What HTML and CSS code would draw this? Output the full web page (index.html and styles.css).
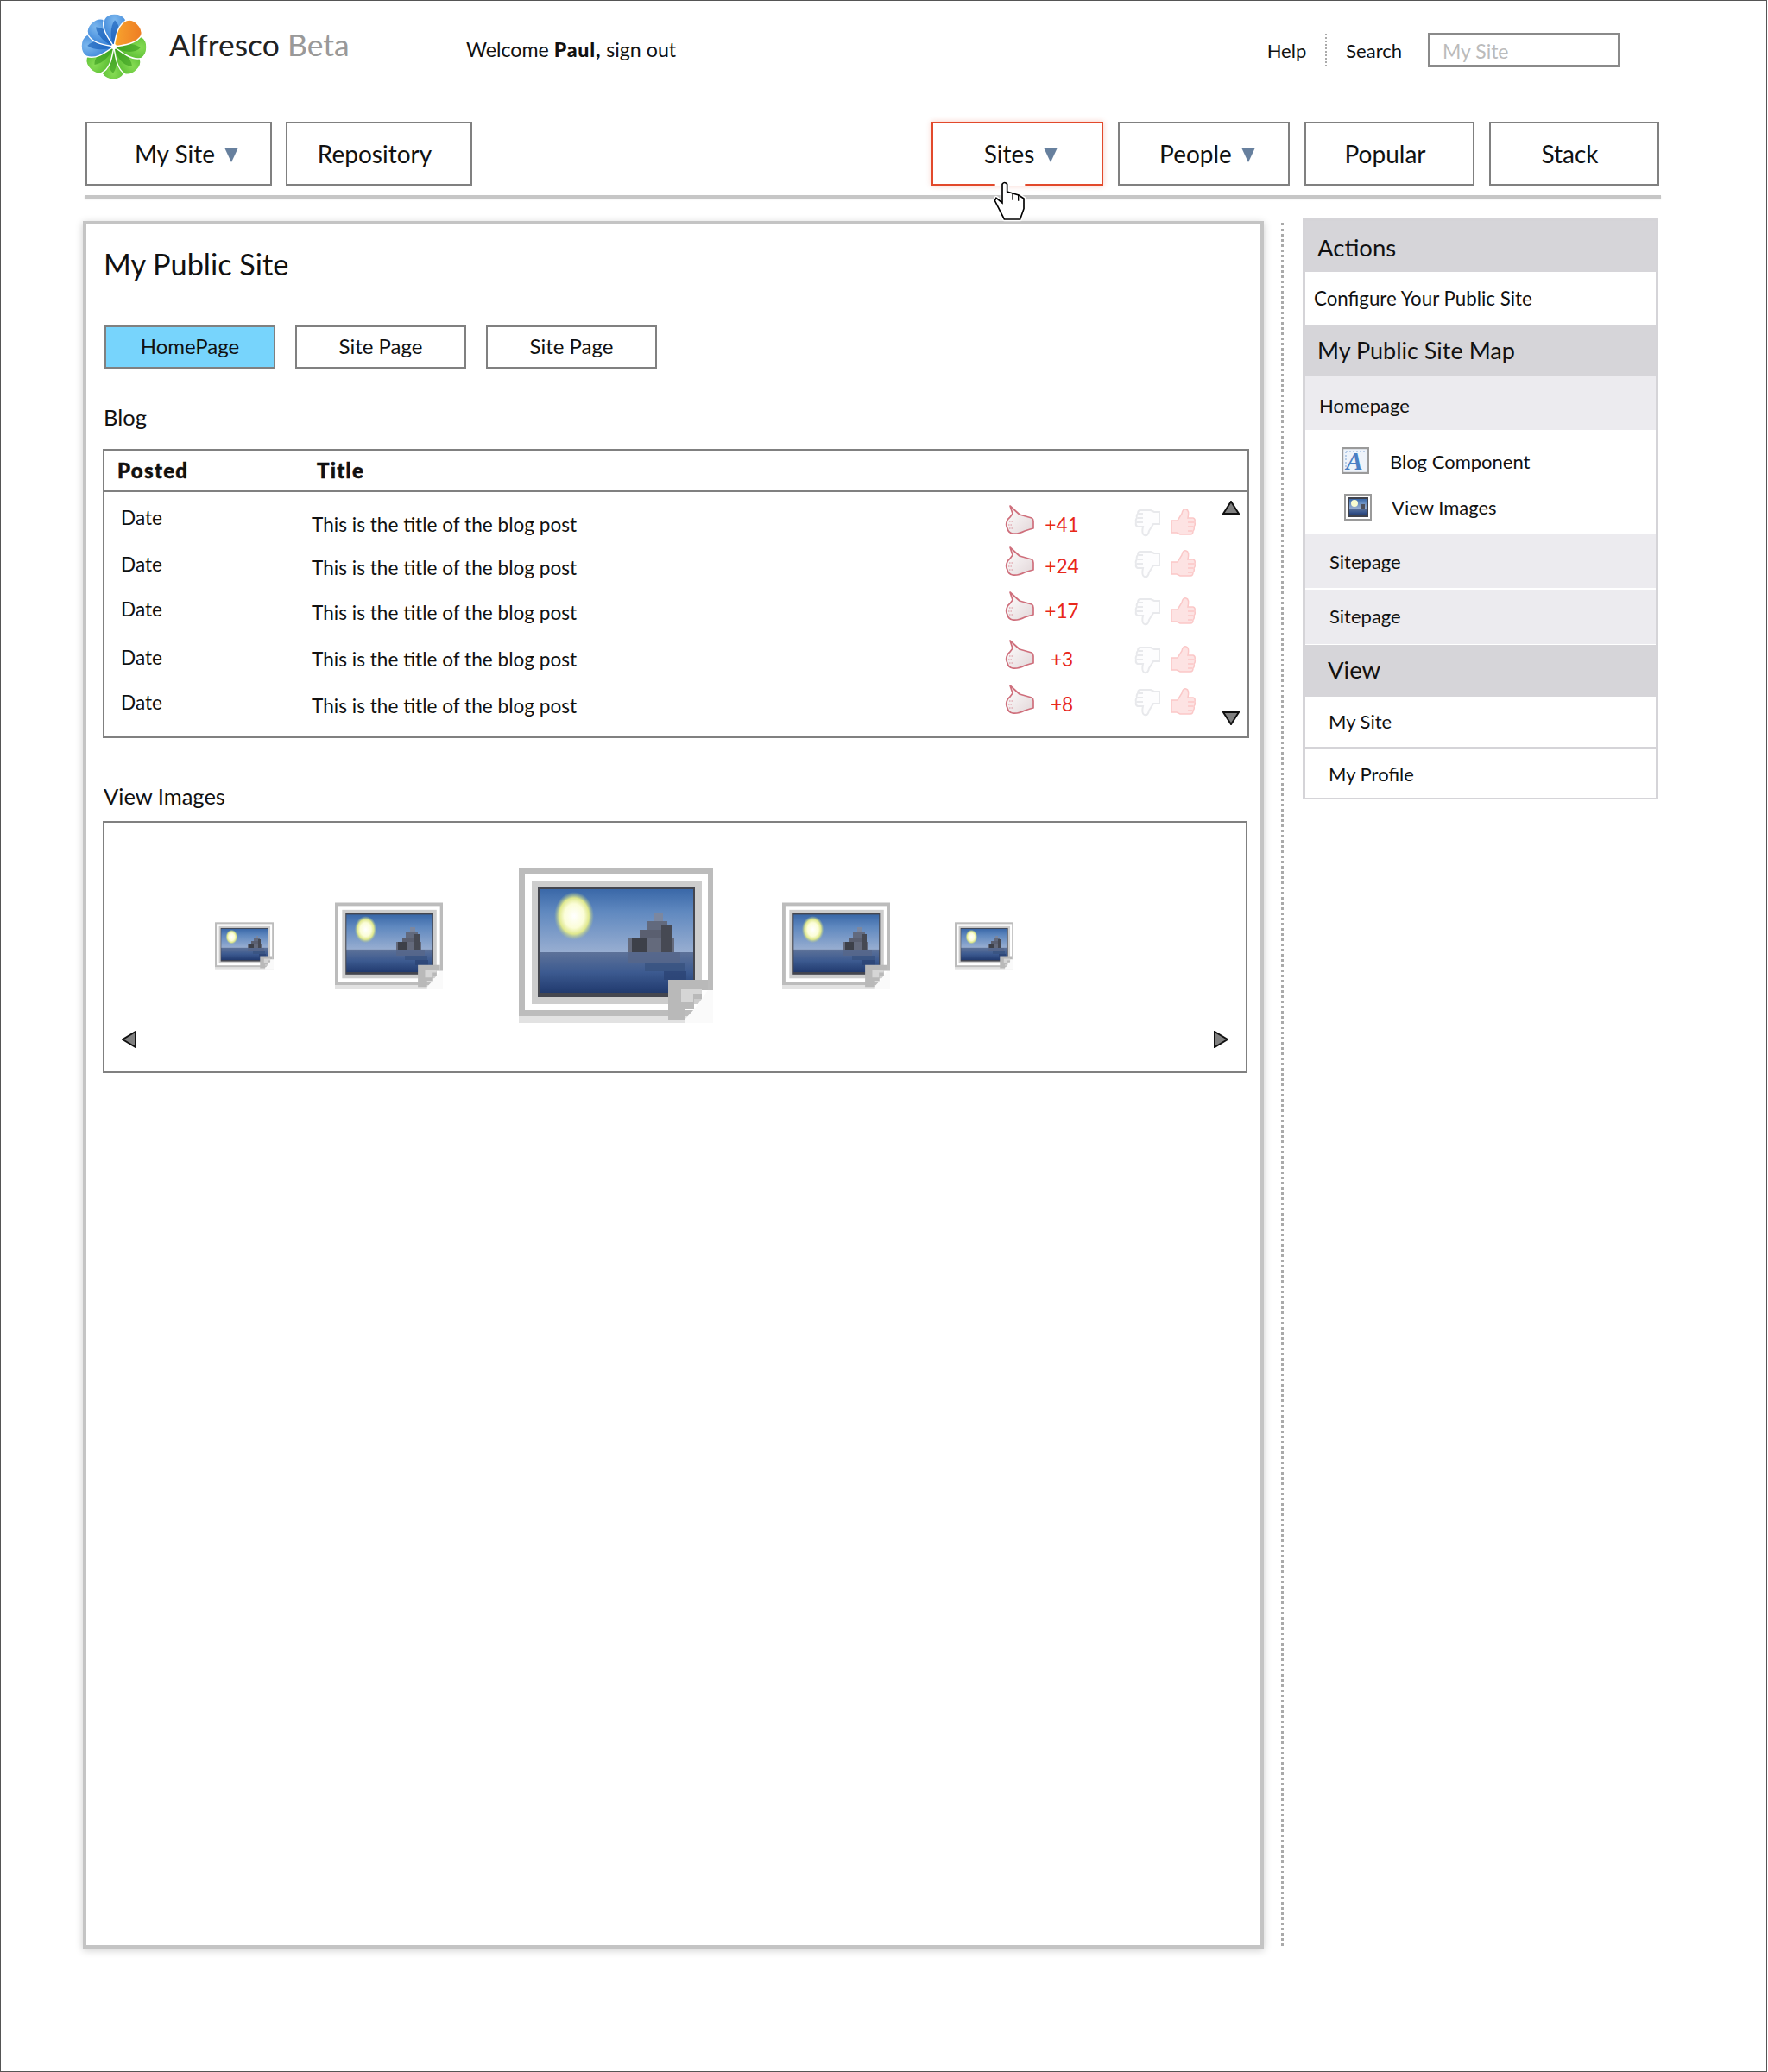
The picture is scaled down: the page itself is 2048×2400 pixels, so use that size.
FILE: index.html
```html
<!DOCTYPE html>
<html lang="en">
<head>
    <meta charset="UTF-8">
    <meta name="viewport" content="width=device-width, initial-scale=1.0">
    <title>Alfresco Beta - My Public Site</title>
    <link rel="stylesheet" href="styles.css">
</head>
<body>
    <!-- shared drawings -->
    <svg class="defs" xmlns="http://www.w3.org/2000/svg">
        <defs>
            <linearGradient id="sky" x1="0" y1="0" x2="0" y2="1">
                <stop offset="0" stop-color="#3a68a8"/>
                <stop offset="0.35" stop-color="#5f88bf"/>
                <stop offset="1" stop-color="#98aed1"/>
            </linearGradient>
            <linearGradient id="water" x1="0" y1="0" x2="0" y2="1">
                <stop offset="0" stop-color="#5d7299"/>
                <stop offset="0.5" stop-color="#3c5a90"/>
                <stop offset="1" stop-color="#213a6e"/>
            </linearGradient>
            <radialGradient id="sun">
                <stop offset="0" stop-color="#ffffff"/>
                <stop offset="0.5" stop-color="#fbfdd8"/>
                <stop offset="0.75" stop-color="#dfe88e"/>
                <stop offset="1" stop-color="#a9c08f" stop-opacity="0"/>
            </radialGradient>
            <linearGradient id="handFill" x1="0" y1="0" x2="1" y2="1">
                <stop offset="0" stop-color="#ffffff"/>
                <stop offset="1" stop-color="#e2d6d8"/>
            </linearGradient>
            <radialGradient id="petalBlue" cx="0.5" cy="0.2" r="0.9">
                <stop offset="0" stop-color="#7db8ee"/>
                <stop offset="1" stop-color="#1f6fd0"/>
            </radialGradient>
            <radialGradient id="petalGreen" cx="0.5" cy="0.2" r="0.9">
                <stop offset="0" stop-color="#86dc54"/>
                <stop offset="1" stop-color="#43ad22"/>
            </radialGradient>
            <linearGradient id="petalOrange" x1="0.8" y1="0" x2="0" y2="1">
                <stop offset="0" stop-color="#ee7c24"/>
                <stop offset="0.6" stop-color="#f59a2c"/>
                <stop offset="1" stop-color="#fbc512"/>
            </linearGradient>
            <symbol id="photo" viewBox="0 0 225 180">
                <rect x="0" y="172" width="225" height="8" fill="#e2e2e2"/>
                <rect width="225" height="172" fill="#bcbcbc"/>
                <rect x="7" y="7" width="212" height="158" fill="#ffffff"/>
                <rect x="15" y="15" width="197" height="143" fill="#cdcdcd"/>
                <rect x="22" y="22" width="182" height="128" fill="#44464f"/>
                <rect x="24" y="25" width="178" height="73" fill="url(#sky)"/>
                <rect x="24" y="98" width="178" height="47" fill="url(#water)"/>
                <ellipse cx="64" cy="56" rx="23" ry="28" fill="url(#sun)"/>
                <g shape-rendering="crispEdges">
                    <rect x="157" y="52" width="10" height="10" fill="#7b87a0"/>
                    <rect x="148" y="62" width="24" height="10" fill="#626a7e"/>
                    <rect x="140" y="72" width="36" height="10" fill="#5a5f70"/>
                    <rect x="127" y="82" width="53" height="16" fill="#646a7c"/>
                    <rect x="131" y="82" width="18" height="16" fill="#3d4049"/>
                    <rect x="165" y="66" width="12" height="32" fill="#464953"/>
                    <rect x="127" y="98" width="60" height="12" fill="#56668a" opacity="0.85"/>
                    <rect x="146" y="110" width="46" height="10" fill="#38527f" opacity="0.8"/>
                    <rect x="168" y="120" width="26" height="10" fill="#2c4474" opacity="0.8"/>
                </g>
                <polygon points="219,142 225,142 225,180 192,180 192,176 203,164 212,152" fill="#fafafa"/>
                <polygon points="173,130 219,130 219,142 212,142 212,152 203,152 203,164 192,164 192,176 173,176" fill="#b9b9b9"/>
                <polygon points="188,140 212,140 212,146 202,146 202,156 188,156" fill="#d6d6d6"/>
            </symbol>
            <symbol id="pointHand" viewBox="0 0 34 35">
                <path d="M6 1 L17 11 L31 15 Q33 16 33 19 L33 27 Q29 28 23 30 Q15 34 9 33 Q4 32 3 27 Q1 24 2 20 Q3 16 6 14 L9 10 Z" fill="url(#handFill)" stroke="#cf6f7c" stroke-width="1.7" stroke-linejoin="round"/>
                <path d="M5 19 L9 19 M4 23 L8 23 M5 27 L9 27" stroke="#d98d97" stroke-width="1.2" stroke-dasharray="1.5 1"/>
            </symbol>
            <symbol id="thumbUp" viewBox="0 0 32 34">
                <path d="M3 15 H10 L15 7 Q16 1 20 2 Q24 3 22 12 H28 Q31 13 30 17 Q31 20 29 22 Q30 25 28 27 Q28 31 25 31 H13 L9 29 H3 Z"/>
                <path d="M22 17 H29 M22 22 H28 M22 27 H27" fill="none"/>
            </symbol>
        </defs>
    </svg>

    <div class="page">
        <header class="topbar">
            <svg class="logo" viewBox="-39 -39 78 78" xmlns="http://www.w3.org/2000/svg">
                <g stroke="#ffffff" stroke-width="1.4">
                    <g transform="rotate(180)"><path d="M0 0 C-6 -9 -15 -20 -11 -31 C-7 -39 8 -39 13 -31 C16 -21 7 -9 0 0Z" fill="url(#petalGreen)"/><path d="M0 0 C-4 -9 -5 -22 1 -30 C8 -24 7 -11 0 0Z" fill="#2f9318" opacity="0.55" stroke="none"/></g>
                    <g transform="rotate(135)"><path d="M0 0 C-6 -9 -15 -20 -11 -31 C-7 -39 8 -39 13 -31 C16 -21 7 -9 0 0Z" fill="url(#petalGreen)"/><path d="M0 0 C-4 -9 -5 -22 1 -30 C8 -24 7 -11 0 0Z" fill="#2f9318" opacity="0.55" stroke="none"/></g>
                    <g transform="rotate(90)"><path d="M0 0 C-6 -9 -15 -20 -11 -31 C-7 -39 8 -39 13 -31 C16 -21 7 -9 0 0Z" fill="url(#petalGreen)"/><path d="M0 0 C-4 -9 -5 -22 1 -30 C8 -24 7 -11 0 0Z" fill="#2f9318" opacity="0.55" stroke="none"/></g>
                    <g transform="rotate(225)"><path d="M0 0 C-6 -9 -15 -20 -11 -31 C-7 -39 8 -39 13 -31 C16 -21 7 -9 0 0Z" fill="url(#petalGreen)"/><path d="M0 0 C-4 -9 -5 -22 1 -30 C8 -24 7 -11 0 0Z" fill="#2f9318" opacity="0.55" stroke="none"/></g>
                    <g transform="rotate(270)"><path d="M0 0 C-6 -9 -15 -20 -11 -31 C-7 -39 8 -39 13 -31 C16 -21 7 -9 0 0Z" fill="url(#petalBlue)"/><path d="M0 0 C-4 -9 -5 -22 1 -30 C8 -24 7 -11 0 0Z" fill="#0f57b4" opacity="0.6" stroke="none"/></g>
                    <g transform="rotate(315)"><path d="M0 0 C-6 -9 -15 -20 -11 -31 C-7 -39 8 -39 13 -31 C16 -21 7 -9 0 0Z" fill="url(#petalBlue)"/><path d="M0 0 C-4 -9 -5 -22 1 -30 C8 -24 7 -11 0 0Z" fill="#0f57b4" opacity="0.6" stroke="none"/></g>
                    <g transform="rotate(0)"><path d="M0 0 C-6 -9 -15 -20 -11 -31 C-7 -39 8 -39 13 -31 C16 -21 7 -9 0 0Z" fill="url(#petalBlue)"/><path d="M0 0 C-4 -9 -5 -22 1 -30 C8 -24 7 -11 0 0Z" fill="#0f57b4" opacity="0.6" stroke="none"/></g>
                    <g transform="rotate(45)"><path d="M0 0 C-6 -9 -15 -20 -11 -31 C-7 -39 8 -39 13 -31 C16 -21 7 -9 0 0Z" fill="url(#petalOrange)"/></g>
                </g>
                <circle r="3" fill="#ffffff"/>
            </svg>
            <div class="brand">Alfresco <span class="brand-beta">Beta</span></div>
            <div class="welcome">Welcome <strong>Paul,</strong> sign out</div>
            <div class="tools">
                <span class="tool-help">Help</span>
                <span class="tool-sep"></span>
                <span class="tool-search">Search</span>
                <input class="search-box" type="text" placeholder="My Site">
            </div>
        </header>

        <nav class="mainnav">
            <a class="nav-item has-caret nav-wide nav-mysite">My Site <span class="caret"></span></a>
            <a class="nav-item nav-wide nav-plain">Repository</a>
            <span class="nav-space"></span>
            <a class="nav-item has-caret nav-sites active">Sites <span class="caret"></span></a>
            <a class="nav-item has-caret nav-people">People <span class="caret"></span></a>
            <a class="nav-item nav-plain">Popular</a>
            <a class="nav-item nav-plain">Stack</a>
        </nav>
        <div class="nav-rule"></div>

        <div class="content">
            <main class="panel">
                <h1 class="site-title">My Public Site</h1>
                <div class="tabs">
                    <a class="tab selected">HomePage</a>
                    <a class="tab">Site Page</a>
                    <a class="tab">Site Page</a>
                </div>

                <h2 class="section-label blog-label">Blog</h2>
                <div class="blog-table">
                    <div class="blog-head">
                        <span class="head-posted">Posted</span>
                        <span class="head-title">Title</span>
                    </div>
                    <div class="blog-body" id="blogRows"></div>
                    <svg class="scroll-arrow scroll-up" viewBox="0 0 20 16"><polygon points="10,1 19,15 1,15"/></svg>
                    <svg class="scroll-arrow scroll-down" viewBox="0 0 20 16"><polygon points="1,1 19,1 10,15"/></svg>
                </div>

                <h2 class="section-label images-label">View Images</h2>
                <div class="image-box">
                    <div class="strip">
                        <svg class="thumb thumb-sm"><use href="#photo"/></svg>
                        <svg class="thumb thumb-md"><use href="#photo"/></svg>
                        <svg class="thumb thumb-lg"><use href="#photo"/></svg>
                        <svg class="thumb thumb-md"><use href="#photo"/></svg>
                        <svg class="thumb thumb-sm"><use href="#photo"/></svg>
                    </div>
                    <div class="strip-arrows">
                        <svg class="strip-arrow" viewBox="0 0 17 20"><polygon points="16,1 16,19 1,10"/></svg>
                        <svg class="strip-arrow" viewBox="0 0 17 20"><polygon points="1,1 1,19 16,10"/></svg>
                    </div>
                </div>
            </main>

            <div class="divider"></div>

            <aside class="sidebar">
                <div class="side-head side-actions">Actions</div>
                <div class="side-link side-config">Configure Your Public Site</div>
                <div class="side-head side-map">My Public Site Map</div>
                <div class="side-sub side-home">Homepage</div>
                <div class="side-comps">
                    <div class="comp">
                        <svg class="comp-icon" viewBox="0 0 32 31">
                            <rect x="1" y="1" width="30" height="29" fill="#eef3fa" stroke="#9a9a9a" stroke-width="2.4"/>
                            <path d="M5 5 H27 M5 5 V26" stroke="#a9c3e4" stroke-width="1.6" stroke-dasharray="2 2"/>
                            <text x="15" y="26" text-anchor="middle" class="comp-letter">A</text>
                        </svg>
                        <span>Blog Component</span>
                    </div>
                    <div class="comp comp-images">
                        <svg class="comp-icon" viewBox="0 0 32 31">
                            <rect x="1" y="1" width="30" height="29" fill="#ffffff" stroke="#9a9a9a" stroke-width="2"/>
                            <rect x="4" y="4" width="24" height="23" fill="#3f424c"/>
                            <rect x="6" y="6" width="20" height="11" fill="url(#sky)"/>
                            <rect x="6" y="17" width="20" height="8" fill="url(#water)"/>
                            <circle cx="12" cy="11" r="4" fill="#f8fbd0"/>
                            <rect x="20" y="12" width="4" height="6" fill="#4d505c"/>
                        </svg>
                        <span>View Images</span>
                    </div>
                </div>
                <div class="side-sub">Sitepage</div>
                <div class="side-sub side-sub-last">Sitepage</div>
                <div class="side-head side-view">View</div>
                <div class="side-link side-plain side-mysite">My Site</div>
                <div class="side-link side-plain side-last">My Profile</div>
            </aside>
        </div>

        <svg class="cursor" viewBox="0 0 240 210" xmlns="http://www.w3.org/2000/svg">
            <rect x="68" y="30" width="104" height="16" fill="#ffffff"/>
            <path d="M93 40 V105 L72 88 L67 97 L100 162 H155 L168 125 V90 L150 78 L130 72 L110 66 V40 Q101 29 93 40 Z" fill="#ffffff" stroke="#ffffff" stroke-width="14" stroke-linejoin="round"/>
            <path d="M93 40 V105 L72 88 L67 97 L100 162 H155 L168 125 V90 L150 78 L130 72 L110 66 V40 Q101 29 93 40 Z" fill="#ffffff" stroke="#000000" stroke-width="5" stroke-linejoin="miter"/>
            <path d="M129 72 V95 M149 78 V98" stroke="#000000" stroke-width="4" fill="none"/>
        </svg>
    </div>

    <script>
        const posts = [
            { score: '+41' },
            { score: '+24' },
            { score: '+17' },
            { score: '+3' },
            { score: '+8' }
        ];

        const blogRows = document.getElementById('blogRows');

        posts.forEach(post => {
            const row = document.createElement('div');
            row.classList.add('blog-row');
            row.innerHTML = `
                <span class="cell-date">Date</span>
                <span class="cell-title">This is the title of the blog post</span>
                <svg class="hand"><use href="#pointHand"/></svg>
                <span class="cell-score">${post.score}</span>
                <span class="votes">
                    <svg class="vote vote-down"><use href="#thumbUp"/></svg>
                    <svg class="vote vote-up"><use href="#thumbUp"/></svg>
                </span>
            `;
            blogRows.appendChild(row);
        });
    </script>
</body>
</html>
```

FILE: styles.css
```css
body {
    font-family: Lato, "Open Sans", sans-serif;
    margin: 0;
    padding: 0;
    background-color: #fff;
    color: #111;
}
.defs {
    display: block;
    width: 0;
    height: 0;
}
.page {
    position: relative;
    box-sizing: border-box;
    width: 2047px;
    height: 2400px;
    border: 1px solid #555;
}

/* top bar */
.topbar {
    display: flex;
    align-items: flex-start;
    height: 140px;
    padding-left: 91px;
    padding-right: 169px;
}
.logo {
    flex: none;
    width: 80px;
    height: 80px;
    margin-top: 13px;
}
.brand {
    flex: none;
    width: 276px;
    margin-top: 31px;
    margin-left: 24px;
    font-size: 35.5px;
    line-height: 40px;
    color: #222;
}
.brand-beta {
    color: #999;
}
.welcome {
    margin-top: 41px;
    margin-left: 68px;
    font-size: 23.2px;
    line-height: 30px;
}
.welcome strong {
    font-weight: 900;
    letter-spacing: 0.8px;
}
.tools {
    display: flex;
    align-items: center;
    margin-left: auto;
    margin-top: 37px;
    font-size: 22px;
}
.tool-sep {
    height: 38px;
    margin: 0 22px;
    border-left: 2px dotted #aaa;
}
.search-box {
    box-sizing: border-box;
    width: 223px;
    height: 40px;
    margin-left: 30px;
    padding: 1px 14px 0;
    border: 3px solid #8a8a8a;
    font-family: inherit;
    font-size: 23px;
    outline: none;
}
.search-box::placeholder {
    color: #bbb;
    opacity: 1;
}

/* main nav */
.mainnav {
    display: flex;
    gap: 17px;
    margin-left: 98px;
    width: 1823px;
}
.nav-space {
    flex: 1;
}
.nav-item {
    box-sizing: border-box;
    display: flex;
    align-items: center;
    justify-content: center;
    gap: 11px;
    width: 197px;
    height: 74px;
    border: 2px solid #808080;
    font-size: 28px;
    color: #111;
}
.nav-wide {
    width: 216px;
}
.nav-wide + .nav-wide {
    margin-left: -1px;
}
.nav-sites {
    width: 199px;
}
.nav-people {
    width: 199px;
}
.has-caret {
    padding-left: 8px;
}
.nav-mysite {
    padding-left: 18px;
}
.nav-plain {
    padding-right: 10px;
}
.nav-item.active {
    border-color: #e2492b;
    box-shadow: 0 0 6px rgba(226, 73, 43, 0.3);
}
.caret {
    width: 0;
    height: 0;
    margin-top: 3px;
    border-left: 8px solid transparent;
    border-right: 8px solid transparent;
    border-top: 17px solid #67809e;
}
.nav-rule {
    width: 1826px;
    height: 4px;
    margin: 11px 0 23px 97px;
    background-color: #c6c6c6;
    box-shadow: 0 1px 2px rgba(0, 0, 0, 0.1);
}

/* layout */
.content {
    display: flex;
    align-items: flex-start;
    margin-left: 95px;
}
.panel {
    box-sizing: border-box;
    flex: none;
    width: 1368px;
    height: 2001px;
    margin-top: 3px;
    padding: 26px 15px 0 20px;
    border: 4px solid #c4c4c4;
    box-shadow: 0 2px 9px rgba(0, 0, 0, 0.2);
}
.divider {
    flex: none;
    height: 1996px;
    margin: 5px 22px 0 20px;
    border-left: 3px dotted #aaa;
}

/* panel contents */
.site-title {
    margin: 0;
    font-size: 34.3px;
    font-weight: 400;
    line-height: 40px;
}
.tabs {
    display: flex;
    gap: 23px;
    margin-top: 51px;
    margin-left: 1px;
}
.tab {
    box-sizing: border-box;
    display: flex;
    align-items: center;
    justify-content: center;
    width: 198px;
    height: 50px;
    padding-bottom: 4px;
    border: 2px solid #808080;
    font-size: 24px;
}
.tab.selected {
    background-color: #77d4fc;
}
.section-label {
    margin: 0;
    font-size: 25.5px;
    font-weight: 400;
    line-height: 30px;
}
.blog-label {
    margin-top: 41px;
    margin-bottom: 22px;
}
.blog-table {
    position: relative;
    box-sizing: border-box;
    width: 1328px;
    height: 335px;
    margin-left: -1px;
    border: 2px solid #808080;
}
.blog-head {
    display: flex;
    box-sizing: border-box;
    height: 48px;
    padding-left: 15px;
    align-items: center;
    border-bottom: 3px solid #808080;
    font-size: 24px;
    font-weight: 900;
    letter-spacing: 1.3px;
    -webkit-text-stroke: 0.5px #111;
}
.head-posted {
    width: 231px;
}
.blog-body {
    padding-top: 14px;
}
.blog-row {
    display: grid;
    grid-template-columns: 221px 803px 32px 68px 84px;
    align-items: start;
    height: 52px;
    padding-left: 19px;
    font-size: 22.6px;
    line-height: 28px;
}
.blog-row:nth-child(1) {
    height: 48px;
}
.blog-row:nth-child(3) {
    height: 56px;
}
.cell-date {
    margin-top: 8px;
}
.blog-row:nth-child(1) .cell-date {
    margin-top: 2px;
}
.cell-title {
    margin-top: 12px;
}
.blog-row:nth-child(1) .cell-title,
.blog-row:nth-child(4) .cell-title {
    margin-top: 10px;
}
.hand {
    width: 34px;
    height: 35px;
    margin-top: 1px;
}
.cell-score {
    margin-top: 10px;
    text-align: center;
    color: #e8281a;
}
.votes {
    display: flex;
    gap: 8px;
    margin-left: 50px;
    margin-top: 4px;
}
.blog-row:nth-child(3) .votes,
.blog-row:nth-child(4) .votes {
    margin-top: 7px;
}
.vote {
    flex: none;
    width: 32px;
    height: 34px;
}
.vote-up {
    fill: #fde3e3;
    stroke: #fbc8c8;
    stroke-width: 1.5;
    filter: blur(0.7px);
}
.vote-down {
    fill: #fdfdfe;
    stroke: #e8e9ec;
    stroke-width: 2;
    transform: rotate(180deg);
    filter: blur(0.6px);
}
.scroll-arrow {
    position: absolute;
    right: 9px;
    width: 20px;
    height: 16px;
    fill: #808080;
    stroke: #111;
    stroke-width: 2;
}
.scroll-up {
    top: 58px;
}
.scroll-down {
    bottom: 13px;
}
.images-label {
    margin-top: 52px;
    margin-bottom: 14px;
}
.image-box {
    box-sizing: border-box;
    width: 1326px;
    height: 292px;
    margin-left: -1px;
    padding-top: 52px;
    border: 2px solid #808080;
}
.strip {
    display: flex;
    align-items: center;
    height: 180px;
    padding-left: 128px;
}
.thumb {
    flex: none;
    filter: blur(0.5px);
}
.thumb-sm {
    width: 68px;
    height: 55px;
}
.thumb-md {
    width: 125px;
    height: 101px;
}
.thumb-lg {
    width: 225px;
    height: 180px;
}
.thumb:nth-child(2) {
    margin-left: 71px;
}
.thumb:nth-child(3) {
    margin-left: 88px;
}
.thumb:nth-child(4) {
    margin-left: 80px;
}
.thumb:nth-child(5) {
    margin-left: 75px;
}
.strip-arrows {
    display: flex;
    justify-content: space-between;
    margin-top: 9px;
    padding: 0 20px;
}
.strip-arrow {
    width: 17px;
    height: 20px;
    fill: #808080;
    stroke: #111;
    stroke-width: 2;
}

/* sidebar */
.sidebar {
    box-sizing: border-box;
    flex: none;
    width: 412px;
    height: 673px;
    border: 3px solid #d5d4d8;
    border-width: 3px 3px 2px;
    font-size: 22px;
}
.side-head {
    display: flex;
    align-items: center;
    height: 59px;
    background-color: #d6d5d9;
    font-size: 27.5px;
}
.side-actions {
    padding-left: 14px;
    padding-top: 2px;
    box-sizing: border-box;
}
.side-map {
    padding-left: 14px;
    font-size: 27px;
}
.side-view {
    box-sizing: border-box;
    height: 60px;
    padding-left: 26px;
    padding-bottom: 4px;
    margin-top: 1px;
}
.side-link {
    display: flex;
    align-items: center;
    height: 61px;
}
.side-config {
    padding-left: 10px;
    font-size: 22.3px;
}
.side-plain {
    height: 58px;
    padding-left: 27px;
    border-bottom: 2px solid #d5d4d8;
}
.side-mysite {
    box-sizing: border-box;
    height: 60px;
    padding-bottom: 2px;
}
.side-last {
    border-bottom: none;
}
.side-sub {
    display: flex;
    align-items: center;
    height: 62px;
    padding-left: 28px;
    background-color: #ecebef;
}
.side-home {
    margin-top: 1px;
    padding-left: 16px;
    padding-top: 4px;
    box-sizing: border-box;
}
.side-sub-last {
    height: 63px;
    margin-top: 2px;
    padding-bottom: 2px;
    box-sizing: border-box;
}
.side-comps {
    display: flex;
    flex-direction: column;
    gap: 23px;
    box-sizing: border-box;
    height: 121px;
    padding: 20px 0 0 42px;
}
.comp {
    display: flex;
    align-items: center;
    gap: 24px;
    height: 31px;
}
.comp span {
    padding-top: 2px;
}
.comp-images {
    padding-left: 3px;
}
.comp-images span {
    padding-top: 0;
    margin-left: -1px;
}
.comp-icon {
    flex: none;
    width: 32px;
    height: 31px;
}
.comp-letter {
    font-family: "Liberation Serif", serif;
    font-size: 29px;
    font-weight: 700;
    font-style: italic;
    fill: #4a7fc4;
}

/* mouse pointer over the nav */
.cursor {
    position: absolute;
    left: 1129px;
    top: 199px;
    width: 80px;
    height: 70px;
}
```
